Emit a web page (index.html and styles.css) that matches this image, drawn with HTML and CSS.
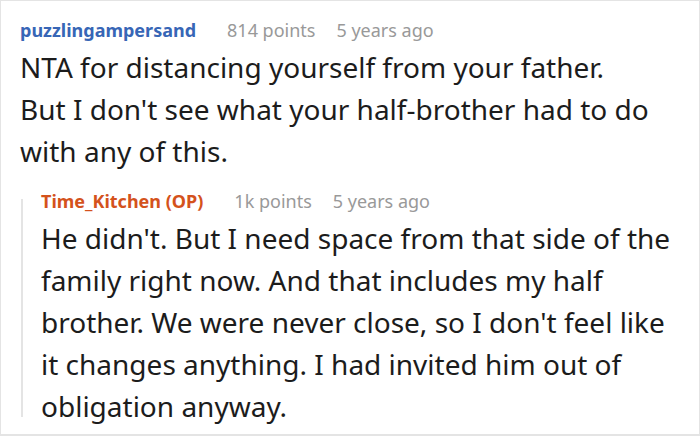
FILE: index.html
```html
<!DOCTYPE html>
<html>
<head>
<meta charset="utf-8">
<link rel="stylesheet" href="styles.css">
</head>
<body>
<div class="frame">
  <div class="comment">
    <div class="meta">
      <span class="author author-blue">puzzlingampersand</span>
      <span class="points">814 points</span>
      <span class="time">5 years ago</span>
    </div>
    <div class="text text-top">NTA for distancing yourself from your father. But I don't see what your half-brother had to do with any of this.</div>
  </div>
  <div class="reply">
    <div class="reply-bar"></div>
    <div class="reply-body">
      <div class="meta">
        <span class="author author-orange">Time_Kitchen (OP)</span>
        <span class="points">1k points</span>
        <span class="time">5 years ago</span>
      </div>
      <div class="text text-reply">He didn't. But I need space from that side of the family right now. And that includes my half brother. We were never close, so I don't feel like it changes anything. I had invited him out of obligation anyway.</div>
    </div>
  </div>
</div>
</body>
</html>
```
FILE: styles.css
```css
html, body {
  margin: 0;
  padding: 0;
  background: #fff;
}
.frame {
  box-sizing: border-box;
  width: 700px;
  height: 436px;
  border: 1px solid #e4e4e4;
  border-bottom-width: 2px;
  padding: 13px 0 0 19px;
  font-family: "Noto Sans", "Open Sans", sans-serif;
  overflow: hidden;
}
.meta {
  font-size: 18px;
  line-height: 32px;
  display: flex;
  white-space: nowrap;
}
.author {
  font-weight: 700;
  margin-right: 31px;
}
.author-blue { color: #3766b6; }
.author-orange { color: #d4521c; }
.points {
  color: #999;
  margin-right: 21px;
}
.time { color: #999; }
.text {
  font-size: 28px;
  line-height: 42px;
  color: #1c1c1c;
}
.text-top {
  width: 636px;
}
.reply {
  display: flex;
  margin-top: 13px;
}
.reply-bar {
  flex: none;
  width: 2px;
  margin: 14px 0 10px 1px;
  background: #e4e4e4;
}
.reply-body {
  padding-left: 18px;
  width: 643px;
}
```
